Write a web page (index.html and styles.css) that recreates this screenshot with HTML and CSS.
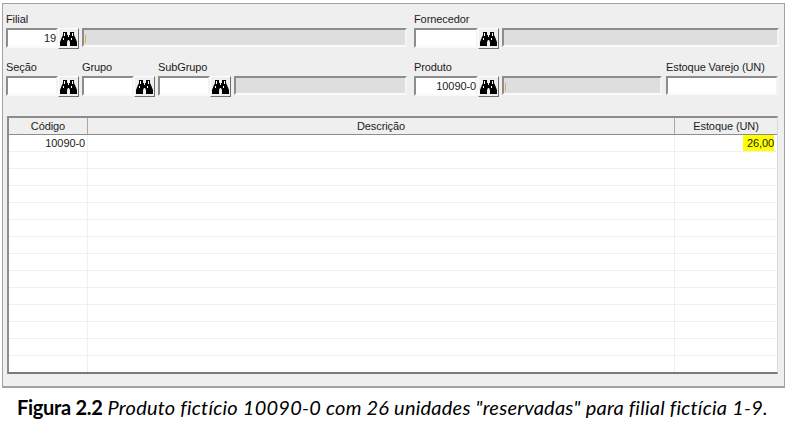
FILE: index.html
```html
<!DOCTYPE html>
<html lang="pt-BR">
<head>
    <meta charset="UTF-8">
    <title>Estoque reservado</title>
    <link rel="stylesheet" href="styles.css">
</head>
<body>
    <svg class="defs" width="0" height="0">
        <symbol id="binoculos" viewBox="0 0 17 14">
            <path d="M3 0h4v3h1v2h1V3h1V0h4v3l1 2 2 5v4H10v-4L9 8H8l-1 2v4H0v-4l2-5 1-2z"/>
            <path fill="#fff" d="M4 1h1v3H4zM12 1h1v3h-1zM3 6h1v2H3zM11 6h1v2h-1z"/>
        </symbol>
    </svg>

    <div class="janela">
        <div class="linha">
            <div class="campo">
                <label>Filial</label>
                <div class="grupo">
                    <span class="entrada e52">19</span>
                    <button class="btn"><svg><use href="#binoculos"/></svg></button>
                </div>
            </div>
            <div class="campo">
                <label>&nbsp;</label>
                <span class="desab w325"><i class="risco"></i></span>
            </div>
            <div class="campo sep">
                <label>Fornecedor</label>
                <div class="grupo">
                    <span class="entrada e64"></span>
                    <button class="btn"><svg><use href="#binoculos"/></svg></button>
                </div>
            </div>
            <div class="campo">
                <label>&nbsp;</label>
                <span class="desab w277"></span>
            </div>
        </div>

        <div class="linha">
            <div class="campo">
                <label>Seção</label>
                <div class="grupo">
                    <span class="entrada e52"></span>
                    <button class="btn"><svg><use href="#binoculos"/></svg></button>
                </div>
            </div>
            <div class="campo">
                <label>Grupo</label>
                <div class="grupo">
                    <span class="entrada e52"></span>
                    <button class="btn"><svg><use href="#binoculos"/></svg></button>
                </div>
            </div>
            <div class="campo">
                <label>SubGrupo</label>
                <div class="grupo">
                    <span class="entrada e52"></span>
                    <button class="btn"><svg><use href="#binoculos"/></svg></button>
                </div>
            </div>
            <div class="campo">
                <label>&nbsp;</label>
                <span class="desab w173"></span>
            </div>
            <div class="campo sep">
                <label>Produto</label>
                <div class="grupo">
                    <span class="entrada e64">10090-0</span>
                    <button class="btn"><svg><use href="#binoculos"/></svg></button>
                </div>
            </div>
            <div class="campo">
                <label>&nbsp;</label>
                <span class="desab w160"><i class="risco"></i></span>
            </div>
            <div class="campo varejo">
                <label>Estoque Varejo (UN)</label>
                <span class="entrada e112"></span>
            </div>
        </div>

        <div class="grade">
            <table>
                <colgroup>
                    <col class="c1">
                    <col class="c2">
                    <col class="c3">
                </colgroup>
                <thead>
                    <tr><th>Código</th><th>Descrição</th><th>Estoque (UN)</th></tr>
                </thead>
                <tbody>
                    <tr><td class="num">10090-0</td><td></td><td class="num"><span class="destaque">26,00</span></td></tr>
                    <tr><td></td><td></td><td></td></tr>
                    <tr><td></td><td></td><td></td></tr>
                    <tr><td></td><td></td><td></td></tr>
                    <tr><td></td><td></td><td></td></tr>
                    <tr><td></td><td></td><td></td></tr>
                    <tr><td></td><td></td><td></td></tr>
                    <tr><td></td><td></td><td></td></tr>
                    <tr><td></td><td></td><td></td></tr>
                    <tr><td></td><td></td><td></td></tr>
                    <tr><td></td><td></td><td></td></tr>
                    <tr><td></td><td></td><td></td></tr>
                    <tr><td></td><td></td><td></td></tr>
                    <tr class="ultima"><td></td><td></td><td></td></tr>
                </tbody>
            </table>
        </div>
    </div>

    <p class="legenda"><b>Figura 2.2</b> <em>Produto fictício 10090-0 com 26 unidades "reservadas" para filial fictícia 1-9.</em></p>
</body>
</html>
```

FILE: styles.css
```css
* {
    box-sizing: border-box;
}

html, body {
    height: 423px;
    overflow: hidden;
}

body {
    margin: 0;
    padding: 3px 0 0 2px;
    background: #fff;
    font-family: "Liberation Sans", Arial, sans-serif;
    font-size: 11px;
    letter-spacing: -0.1px;
    color: #1c1c1c;
}

.defs {
    position: absolute;
}

.janela {
    width: 783px;
    height: 385px;
    padding: 7px 6px 0 3px;
    background: #efefef;
    border: 1px solid #a3a3a3;
    border-bottom-width: 2px;
}

.linha {
    display: flex;
    gap: 3px;
    margin-bottom: 12px;
    height: 36px;
}

.campo {
    display: flex;
    flex-direction: column;
}

.campo label {
    height: 17px;
    line-height: 17px;
    white-space: nowrap;
}

.sep {
    margin-left: 4px;
}

.varejo {
    margin-left: 1px;
}

.grupo {
    display: flex;
}

.entrada, .desab {
    display: block;
    height: 20px;
    line-height: 17px;
    border: 2px solid;
    border-color: #8c8c8c #f4f4f4 #fafafa #8c8c8c;
}

.entrada {
    background: #fff;
    text-align: right;
}

.desab {
    background: #dedede;
    padding: 5px 0 0 1px;
}

.risco {
    display: block;
    width: 1px;
    height: 8px;
    background: #e2b04a;
}

.e52 { width: 52px; }
.e64 { width: 64px; }
.e112 { width: 112px; }
.w325 { width: 325px; }
.w277 { width: 277px; }
.w173 { width: 173px; }
.w160 { width: 160px; }

.btn {
    width: 21px;
    height: 21px;
    padding: 0;
    display: flex;
    align-items: center;
    justify-content: center;
    background: #efefef;
    border: 1px solid;
    border-color: #fff #6e6e6e #6e6e6e #fff;
}

.btn svg {
    width: 17px;
    height: 14px;
    fill: #000;
}

.grade {
    margin: 21px 0 0 1px;
    width: 771px;
    height: 258px;
    background: #fff;
    border: 2px solid;
    border-right-width: 1px;
    border-color: #8c8c8c #d8d8d8 #7a7a7a #8c8c8c;
    overflow: hidden;
}

table {
    width: 768px;
    table-layout: fixed;
    border-collapse: separate;
    border-spacing: 0;
}

.c1 { width: 79px; }
.c2 { width: 587px; }
.c3 { width: 102px; }

th {
    height: 17px;
    padding: 0;
    font-weight: normal;
    background: #efefef;
    border-right: 1px solid #a8a8a8;
    border-bottom: 1px solid #8c8c8c;
    text-align: center;
}

th:last-child {
    border-right: 0;
}

td {
    height: 17px;
    padding: 0 2px 0 0;
    border-right: 1px solid #efefef;
    border-bottom: 1px solid #efefef;
}

td:last-child {
    border-right: 0;
    padding-right: 3px;
}

.ultima td {
    border-bottom: 0;
}

.num {
    text-align: right;
}

.destaque {
    display: inline-block;
    height: 16px;
    line-height: 16px;
    padding-left: 4px;
    background: #ff0;
}

.legenda {
    margin: 9px 0 0 15px;
    font-family: Lato, "Open Sans", sans-serif;
    font-size: 20px;
    line-height: 20px;
    color: #000;
    white-space: nowrap;
}

.legenda b {
    letter-spacing: -0.3px;
}

.legenda em {
    letter-spacing: 0.22px;
}
```
